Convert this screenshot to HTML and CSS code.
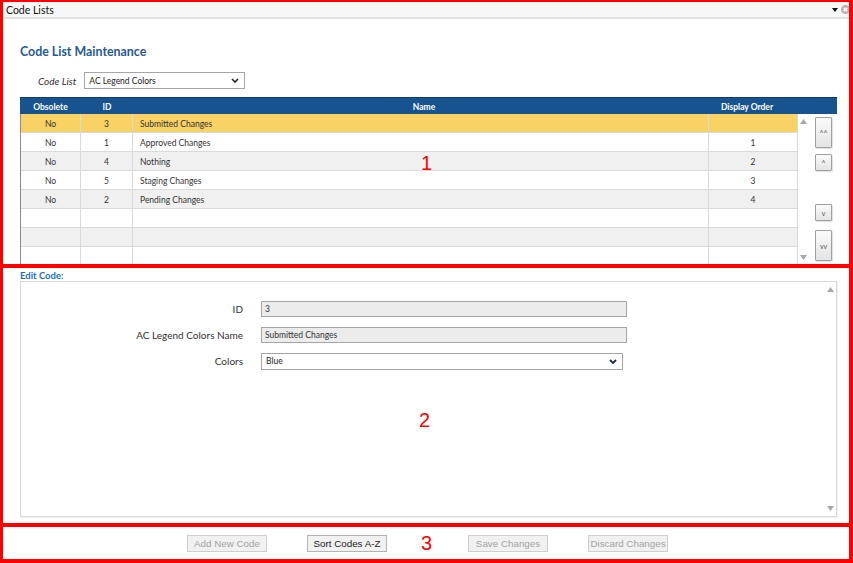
FILE: index.html
```html
<!DOCTYPE html>
<html lang="en">

<head>
    <meta charset="UTF-8">
    <title>Code Lists</title>
    <link rel="stylesheet" href="styles.css">
</head>

<body>
    <div class="frame">

        <section class="pane pane-list">
            <div class="titlebar">
                <span class="titlebar-text">Code Lists</span>
                <span class="titlebar-icons">
                    <svg class="tb-caret" width="6" height="4" viewBox="0 0 6 4"><path d="M0 0h6L3 4z" fill="#111"/></svg>
                    <svg class="tb-close" width="9" height="9" viewBox="0 0 9 9"><circle cx="4.5" cy="4.5" r="4.5" fill="#b4b4b4"/><path d="M2.7 2.7l3.6 3.6M6.3 2.7L2.7 6.3" stroke="#fff" stroke-width="1.3"/></svg>
                </span>
            </div>

            <div class="list-body">
                <h1 class="page-title">Code List Maintenance</h1>

                <div class="picker">
                    <span class="picker-label">Code List</span>
                    <div class="select select-small">
                        <span>AC Legend Colors</span>
                        <svg width="8" height="5" viewBox="0 0 8 5"><path d="M1 1l3 3 3-3" fill="none" stroke="#222" stroke-width="1.6"/></svg>
                    </div>
                </div>

                <div class="grid">
                    <div class="grid-head">
                        <div>Obsolete</div>
                        <div>ID</div>
                        <div>Name</div>
                        <div>Display Order</div>
                        <div></div>
                    </div>
                    <div class="grid-main">
                        <div class="grid-rows">
                            <div class="row selected"><div>No</div><div>3</div><div class="name">Submitted Changes</div><div></div></div>
                            <div class="row"><div>No</div><div>1</div><div class="name">Approved Changes</div><div>1</div></div>
                            <div class="row alt"><div>No</div><div>4</div><div class="name">Nothing</div><div>2</div></div>
                            <div class="row"><div>No</div><div>5</div><div class="name">Staging Changes</div><div>3</div></div>
                            <div class="row alt"><div>No</div><div>2</div><div class="name">Pending Changes</div><div>4</div></div>
                            <div class="row"><div></div><div></div><div class="name"></div><div></div></div>
                            <div class="row alt"><div></div><div></div><div class="name"></div><div></div></div>
                            <div class="row"><div></div><div></div><div class="name"></div><div></div></div>
                        </div>
                        <div class="vscroll">
                            <svg width="7" height="5" viewBox="0 0 7 5"><path d="M0 5h7L3.5 0z" fill="#a8a8a8"/></svg>
                            <svg width="7" height="5" viewBox="0 0 7 5"><path d="M0 0h7L3.5 5z" fill="#a8a8a8"/></svg>
                        </div>
                        <div class="order-btns">
                            <button class="order-btn tall">^^</button>
                            <button class="order-btn">^</button>
                            <button class="order-btn down">v</button>
                            <button class="order-btn tall">vv</button>
                        </div>
                    </div>
                </div>
            </div>

            <span class="marker marker-1">1</span>
        </section>

        <section class="pane pane-edit">
            <div class="edit-title">Edit Code:</div>
            <div class="edit-panel">
                <div class="edit-form">
                    <label>ID</label>
                    <div class="field readonly">3</div>
                    <label>AC Legend Colors Name</label>
                    <div class="field readonly">Submitted Changes</div>
                    <label>Colors</label>
                    <div class="select select-wide">
                        <span>Blue</span>
                        <svg width="8" height="5" viewBox="0 0 8 5"><path d="M1 1l3 3 3-3" fill="none" stroke="#1d2b45" stroke-width="1.8"/></svg>
                    </div>
                </div>
                <div class="vscroll panel-scroll">
                    <svg width="7" height="5" viewBox="0 0 7 5"><path d="M0 5h7L3.5 0z" fill="#a8a8a8"/></svg>
                    <svg width="7" height="5" viewBox="0 0 7 5"><path d="M0 0h7L3.5 5z" fill="#a8a8a8"/></svg>
                </div>
            </div>
            <span class="marker marker-2">2</span>
        </section>

        <section class="pane pane-actions">
            <button class="action-btn" disabled>Add New Code</button>
            <button class="action-btn">Sort Codes A-Z</button>
            <button class="action-btn btn-save" disabled>Save Changes</button>
            <button class="action-btn" disabled>Discard Changes</button>
            <span class="marker marker-3">3</span>
        </section>

    </div>
</body>

</html>
```

FILE: styles.css
```css
*,
*::before,
*::after {
    box-sizing: border-box;
}

body {
    margin: 0;
    background: #fff;
    font-family: 'Lato', 'Open Sans', sans-serif;
    color: #333;
}

.frame {
    width: 853px;
    height: 563px;
    border-style: solid;
    border-color: #ff0000;
    border-width: 2px 4px 4px 3px;
    display: flex;
    flex-direction: column;
}

.pane {
    position: relative;
    overflow: hidden;
}

.pane-list {
    height: 262px;
    border-bottom: 4px solid #ff0000;
    flex: none;
    box-sizing: content-box;
}

.pane-edit {
    height: 255px;
    border-bottom: 4px solid #ff0000;
    flex: none;
    box-sizing: content-box;
    padding: 0 0 0 17px;
}

.pane-actions {
    flex: 1;
    display: flex;
    align-items: center;
    padding-left: 184px;
    gap: 40px;
}

.marker {
    position: absolute;
    font-family: 'Liberation Sans', Arial, sans-serif;
    font-size: 20px;
    line-height: 20px;
    color: #ff0000;
}

.marker-1 {
    left: 418px;
    top: 151px;
}

.marker-2 {
    left: 416px;
    top: 142px;
}

.marker-3 {
    left: 418px;
    top: 6px;
}

/* title bar */

.titlebar {
    height: 17px;
    background: #f7f7f7;
    border-bottom: 2px solid #e2e2e2;
    display: flex;
    align-items: center;
    justify-content: space-between;
    padding: 0 0 0 3px;
}

.titlebar-text {
    font-size: 10.5px;
    color: #111;
}

.titlebar-icons {
    display: flex;
    align-items: center;
    gap: 3px;
    margin-right: -1px;
}

/* list */

.list-body {
    padding-left: 17px;
}

.page-title {
    margin: 25px 0 0;
    font-size: 12.4px;
    line-height: 16px;
    font-weight: bold;
    color: #1f5a96;
}

.picker {
    display: flex;
    align-items: center;
    margin-top: 12px;
    padding-left: 18px;
    gap: 8px;
}

.picker-label {
    font-size: 10px;
    font-style: italic;
    color: #333;
}

.select {
    display: flex;
    align-items: center;
    justify-content: space-between;
    border: 1px solid #a6a6a6;
    background: #fff;
    font-size: 8.5px;
    color: #222;
    padding: 0 5px 0 4px;
}

.select-small {
    width: 161px;
    height: 17px;
}

.select-wide {
    width: 362px;
    height: 17px;
}

.grid {
    margin-top: 8px;
    width: 817px;
}

.grid-head {
    display: grid;
    grid-template-columns: 61px 52px 582px 64px 1fr;
    height: 17px;
    background: #17538f;
    border-top: 1px solid #0f3c69;
    color: #fff;
    font-size: 8.5px;
    font-weight: bold;
}

.grid-head div {
    display: flex;
    align-items: center;
    justify-content: center;
    padding-top: 1px;
}

.grid-main {
    display: flex;
}

.grid-rows {
    border-left: 1px solid #8c8c8c;
}

.row {
    display: grid;
    grid-template-columns: 60px 52px 576px 89px;
    height: 19px;
    background: #fff;
    font-size: 8.5px;
    color: #333;
}

.row.alt {
    background: #f0f0f0;
}

.row.selected {
    background: #f8d264;
}

.row div {
    display: flex;
    align-items: center;
    justify-content: center;
    padding-top: 1px;
    border-right: 1px solid #dadada;
    border-bottom: 1px solid #dadada;
}

.row .name {
    justify-content: flex-start;
    padding-left: 7px;
}

.vscroll {
    width: 11px;
    display: flex;
    flex-direction: column;
    align-items: center;
    justify-content: space-between;
    padding: 5px 0 4px;
    height: 150px;
}

.order-btns {
    width: 28px;
    padding: 3px 0 0 6px;
    display: flex;
    flex-direction: column;
}

.order-btn {
    width: 17px;
    height: 17px;
    padding: 0;
    border: 1px solid #a0a0a0;
    border-radius: 1px;
    background: linear-gradient(#fbfbfb, #e4e4e4);
    box-shadow: 1px 1px 1px rgba(0, 0, 0, 0.12);
    font-family: 'Lato', sans-serif;
    font-size: 7px;
    color: #555;
    margin-bottom: 6px;
}

.order-btn.tall {
    height: 31px;
}

.order-btn.down {
    margin-top: 27px;
    margin-bottom: 9px;
}

/* edit */

.edit-title {
    margin-top: 3px;
    font-size: 9.5px;
    line-height: 10px;
    font-weight: bold;
    color: #1c6fc4;
}

.edit-panel {
    width: 817px;
    height: 236px;
    border: 1px solid #d9d9d9;
    box-shadow: 1px 1px 1px rgba(0, 0, 0, 0.06);
    display: flex;
    justify-content: space-between;
}

.edit-form {
    display: grid;
    grid-template-columns: 222px 366px;
    grid-auto-rows: 16px;
    row-gap: 10px;
    column-gap: 18px;
    align-items: center;
    padding-top: 19px;
    align-content: start;
}

.edit-form label {
    text-align: right;
    font-size: 10px;
    color: #333;
}

.field {
    height: 16px;
    border: 1px solid #a6a6a6;
    font-size: 8.5px;
    color: #333;
    padding-left: 3px;
    display: flex;
    align-items: center;
}

.field.readonly {
    background: #ececec;
}

.panel-scroll {
    height: auto;
    width: 11px;
    padding: 5px 0 5px;
}

/* actions */

.action-btn {
    width: 80px;
    height: 17px;
    padding: 0;
    border: 1px solid #b4b4b4;
    background: #f1f1f1;
    font-family: 'Liberation Sans', Arial, sans-serif;
    font-size: 9.8px;
    color: #222;
}

.action-btn:disabled {
    color: #a3a3a3;
    border-color: #cfcfcf;
}

.btn-save {
    margin-left: 41px;
}
```
